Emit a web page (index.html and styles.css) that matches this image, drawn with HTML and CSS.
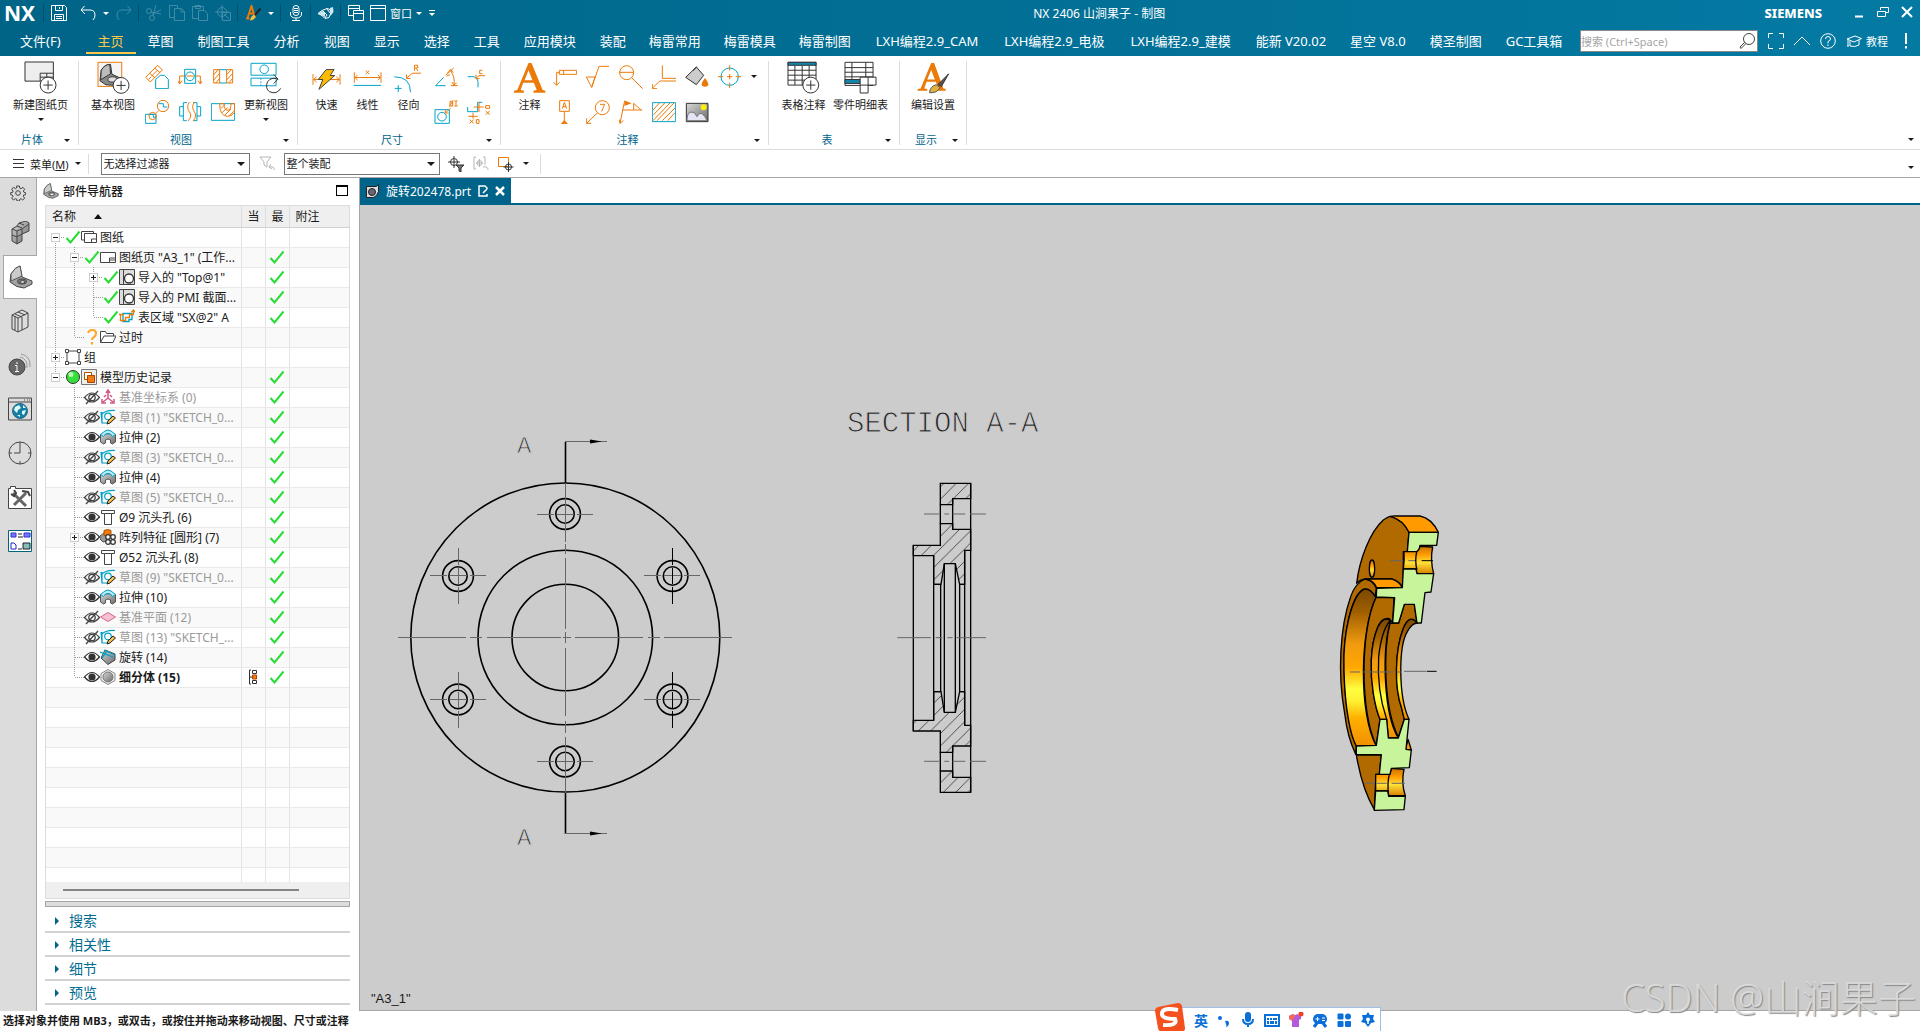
FILE: index.html
```html
<!DOCTYPE html>
<html lang="zh-CN">
<head>
  <meta charset="UTF-8">
  <meta name="viewport" content="width=device-width, initial-scale=1.0">
  <title>NX 2406 山涧果子 - 制图</title>
  <link rel="stylesheet" href="styles.css">
</head>
<body>
  <!-- shared icons -->
  <svg class="defs" width="0" height="0" aria-hidden="true">
    <defs>
      <linearGradient id="steel" x1="0" y1="0" x2="1" y2="1"><stop offset="0" stop-color="#d8d8d8"/><stop offset="1" stop-color="#6a6a6a"/></linearGradient>
      <symbol id="i-check" viewBox="0 0 16 16"><path d="M1.500 9l4 4.500L14.500 2.500" fill="none" stroke="#27dd35" stroke-width="2"/></symbol>
      <symbol id="i-eye" viewBox="0 0 16 16"><path d="M.500 8q7.500-9 15 0q-7.500 9-15 0z" fill="#fff" stroke="#333" stroke-width="1.200"/><circle cx="8" cy="8" r="3.600" fill="#333"/></symbol>
      <symbol id="i-eyeoff" viewBox="0 0 16 16"><path d="M.500 8.500q7.500-9 15 0q-7.500 9-15 0z" fill="none" stroke="#444" stroke-width="1.200"/><circle cx="8" cy="8.500" r="3.200" fill="none" stroke="#444" stroke-width="1.300"/><path d="M2 15L14 2" stroke="#444" stroke-width="1.300"/></symbol>
      <symbol id="i-sketch" viewBox="0 0 16 16"><path d="M2 3v11h6M1 6Q5 1 15 1.500M2 14L1 3" fill="none" stroke="#00a0c6" stroke-width="1.200"/><circle cx="8" cy="7.500" r="3.300" fill="none" stroke="#00a0c6" stroke-width="1.200"/><path d="M7 15l1-3 5-5 2.500 2-5.500 5z" fill="#f4c04a" stroke="#222"/></symbol>
      <symbol id="i-extrude" viewBox="0 0 16 16"><path d="M.500 5.500V13l3 2 2-1v-3q2.500-2 5 0v3l2 1 3-2V5.500l-4-1z" fill="url(#steel)" stroke="#555"/><path d="M.500 5.500L5 2l3-1 3 1 4.500 3.500-3 2-2-2.500q-2.500-1-5 0l-2 2.500z" fill="#b9eaf5" stroke="#00a0c6"/></symbol>
      <symbol id="i-hole" viewBox="0 0 16 16"><path d="M1.500 1.500h13v3h-3v11h-7v-11h-3zM4.500 4.500h7" fill="#fff" stroke="#444"/></symbol>
      <symbol id="i-view" viewBox="0 0 16 16"><path d="M.500.500h15v15H.500z" fill="#ddd" stroke="#444"/><path d="M4.500 1v14" stroke="#444"/><circle cx="10" cy="9.500" r="4.500" fill="#fff" stroke="#333" stroke-width="1.300"/></symbol>
      <symbol id="i-part" viewBox="0 0 24 24"><path d="M1 17L2 9Q6 2 11 1l2 11 10 4v3l-8 4q-7 0-14-6z" fill="#a3a3a3" stroke="#444"/><path d="M2 9Q6 2 11 1l2 10-11 5z" fill="#ccc" stroke="#555"/><ellipse cx="13" cy="16.500" rx="4.500" ry="2.500" fill="#777" stroke="#444"/><ellipse cx="13.500" cy="17" rx="2.500" ry="1.300" fill="#eee"/></symbol>
      <pattern id="hatch" width="37" height="37" patternUnits="userSpaceOnUse"><path d="M-4 41L41-4M-4 4L4-4M33 41L41 33" stroke="#333" stroke-width="2.500"/></pattern>
      <linearGradient id="gold" x1="0" y1="0" x2="0" y2="1"><stop offset="0" stop-color="#7a4800"/><stop offset=".15" stop-color="#a06000"/><stop offset=".35" stop-color="#f09a10"/><stop offset=".5" stop-color="#ffa800"/><stop offset=".64" stop-color="#ffff40"/><stop offset=".72" stop-color="#ffee30"/><stop offset=".82" stop-color="#ffb000"/><stop offset="1" stop-color="#f09000"/></linearGradient>
      <linearGradient id="brass" x1="0" y1="0" x2="0" y2="1"><stop offset="0" stop-color="#c87000"/><stop offset=".3" stop-color="#ff9c00"/><stop offset=".6" stop-color="#ffe03a"/><stop offset="1" stop-color="#d88000"/></linearGradient>
    </defs>
  </svg>

  <header class="header">
    <div class="topbar">
      <div class="quick">
        <span class="logo">NX</span><i class="qsep"></i>
        <button class="q" aria-label="保存"><svg viewBox="0 0 16 16"><path d="M.500.500h13l2 2v13H.500zM4.500.500v5h7v-5M8.500 2v2M3.500 15.500v-6h9v6M5 11.500h6M5 13.500h6"/></svg></button>
        <button class="q undo" aria-label="撤销"><svg viewBox="0 0 16 16"><path d="M4.500 1L1 5l4 4M1 5h9q5 0 5 5 0 3-2 5"/></svg></button>
        <button class="caret" aria-label="撤销列表"></button>
        <button class="q off" aria-label="重做"><svg viewBox="0 0 16 16"><path d="M11.500 1L15 5l-4 4M15 5H6Q1 5 1 10q0 3 2 5"/></svg></button><i class="qsep"></i>
        <button class="q off" aria-label="剪切"><svg viewBox="0 0 16 16"><circle cx="3" cy="6" r="2.500"/><circle cx="6" cy="13" r="2.500"/><path d="M5 7l10 2M7 11l3-11M6 9L15 5"/></svg></button>
        <button class="q off" aria-label="复制"><svg viewBox="0 0 16 16"><path d="M5 12.500H.500V.500h8v3M5.500 3.500h7l3 3v9h-10zM12 4v3h3"/></svg></button>
        <button class="q off" aria-label="粘贴"><svg viewBox="0 0 16 16"><path d="M6 13.500H.500v-12h11V5M3.500.500h5v3h-5zM6.500 5.500h6l3 3v7h-9z"/></svg></button>
        <button class="q off" aria-label="移动"><svg viewBox="0 0 16 16"><circle cx="7" cy="7" r="4.500"/><path d="M7 0v14M0 7h14M7.500 7.500h8v8h-8zM9 9l5 5"/></svg></button><i class="qsep"></i>
        <button class="q" aria-label="编辑设置"><svg viewBox="0 0 16 16"><path class="or bold" d="M1 13.500h3.500M2.500 13L6.500 1 10 13M4.500 8.500h5"/><path class="ink" d="M15.500 3.500L10 10" stroke-width="2"/><path d="M5 15.500q1-5 4-5.500l1.500 1.500Q9 15.500 5 15.500z" fill="#f2c14a" stroke="none"/></svg></button>
        <button class="caret" aria-label="编辑设置列表"></button><i class="qsep"></i>
        <button class="q" aria-label="语音"><svg viewBox="0 0 16 16"><rect x="5" y=".5" width="6" height="10" rx="3"/><path d="M6 3.500h4M6 5.500h4M6 7.500h4M2.500 7v2q0 4 5.500 4t5.500-4V7M8 13v2M4 15.500h8"/></svg></button><i class="qsep"></i>
        <button class="q" aria-label="重复命令"><svg viewBox="0 0 16 16"><path d="M0 8.500l4-3 5-2 3 1 1 3-2 5-4 1-3-3zM5 6l4 4-2 3M9 4l3 4"/><path d="M0 9l4-3 3 2v4l-4-2zM12 3l3-1 .500 5-3 4z" fill="#cfe8f0" stroke="none"/></svg></button><i class="qsep"></i>
        <button class="q" aria-label="层叠"><svg viewBox="0 0 16 16"><path d="M5 10.500H.500V.500h11V5M.500 3.500h11M5.500 5.500h10v10h-10zM5.500 8.500h10"/></svg></button>
        <button class="q win" aria-label="窗口菜单"><svg viewBox="0 0 16 16"><path d="M.500.500h15v15H.500zM.500 3.500h15"/></svg>窗口</button>
        <button class="caret" aria-label="窗口列表"></button>
        <button class="caret bar" aria-label="自定义"></button>
      </div>
      <div class="title">NX 2406 山涧果子 - 制图</div>
      <span class="brand">SIEMENS</span>
      <div class="winctl">
        <button aria-label="最小化"><svg viewBox="0 0 12 12"><path d="M2 10.500h8" stroke-width="2"/></svg></button>
        <button aria-label="还原"><svg viewBox="0 0 12 12"><path d="M3.500 4V1.500h8v5H9M.500 5.500h8v5h-8z"/></svg></button>
        <button aria-label="关闭"><svg viewBox="0 0 12 12"><path d="M1 1l10 10M11 1L1 11" stroke-width="2"/></svg></button>
      </div>
    </div>
    <nav class="menu">
      <a class="file" href="#">文件(F)</a>
      <a class="on" href="#">主页</a>
      <a href="#">草图</a>
      <a href="#">制图工具</a>
      <a href="#">分析</a>
      <a href="#">视图</a>
      <a href="#">显示</a>
      <a href="#">选择</a>
      <a href="#">工具</a>
      <a href="#">应用模块</a>
      <a href="#">装配</a>
      <a class="ml" href="#">梅雷常用</a>
      <a class="ml" href="#">梅雷模具</a>
      <a class="ml" href="#">梅雷制图</a>
      <a class="lxh" href="#">LXH编程2.9_CAM</a>
      <a class="lxh" href="#">LXH编程2.9_电极</a>
      <a class="lxh" href="#">LXH编程2.9_建模</a>
      <a href="#">能新 V20.02</a>
      <a href="#">星空 V8.0</a>
      <a href="#">模圣制图</a>
      <a href="#">GC工具箱</a>
      <div class="menu-right">
        <div class="search">
          <input type="text" aria-label="搜索" placeholder="搜索 (Ctrl+Space)">
          <button aria-label="查找"><svg viewBox="0 0 16 16"><circle cx="10" cy="6" r="5.500"/><path d="M6 9l-5 5 1 1.500 5-5"/></svg></button>
        </div>
        <button aria-label="全屏"><svg viewBox="0 0 16 16"><path d="M.500 5V.500H5M11 .500h4.500V5M15.500 11v4.500H11M5 15.500H.500V11"/></svg></button>
        <button aria-label="折叠功能区"><svg viewBox="0 0 16 16"><path d="M0 12l8-8 8 8"/></svg></button>
        <button aria-label="帮助"><svg viewBox="0 0 16 16"><circle cx="8" cy="8" r="7.300"/><path d="M5.500 6q0-2.500 2.500-2.500T10.500 6Q10.500 7.500 8 8.500v2M8 11.500V13"/></svg></button>
        <button class="tut"><svg viewBox="0 0 16 16"><path d="M1 6l8-3 6.500 2.500L8 9zM4 8v5q5 1.500 9-1V7M2 7v6M1 13h2"/></svg>教程</button>
        <button class="excl" aria-label="通知"><svg viewBox="0 0 4 16"><path d="M2 0v11M2 13v2.500" stroke-width="2"/></svg></button>
      </div>
    </nav>
  </header>

  <div class="ribbon">
    <section class="group sheet">
      <div class="tools">
        <button class="big"><svg viewBox="69 180 100 100"><path d="M72 183h86v58H72zM118 241v-24h40M118 229h40M138 217v24" fill="#eee"/><circle cx="142" cy="253" r="24" fill="#fff"/><path d="M142 239v28M128 253h28"/></svg>新建图纸页<i class="arrow"></i></button>
      </div>
      <footer><span>片体</span><button class="arrow" aria-label="片体选项"></button></footer>
    </section>
    <section class="group views">
      <div class="tools">
        <button class="big w54"><svg viewBox="289 180 100 100"><path class="or" d="M292 184h72v73h-72z" fill="#f4f4f4"/><path d="M298 240l4-32q10-18 28-18l4 30 26 12-16 22-28-2z" fill="#888"/><path d="M302 208q10-18 26-17l2 28-30 18z" fill="#bbb"/><ellipse cx="336" cy="236" rx="14" ry="8" fill="#ddd"/><circle cx="362" cy="254" r="24" fill="#fff"/><path d="M362 240v28M348 254h28"/></svg>基本视图</button>
        <div class="grid c3">
          <button aria-label="投影视图"><svg viewBox="432 195 72 72"><path class="or" d="M434 232l36-36 14 14-36 36zM443 238l8-8M452 228l16-16M462 234l-16-14M477 218l-16-14"/><path class="cy" d="M464 266v-28l14-12h12l12 12v28z" fill="#fff"/></svg></button>
          <button aria-label="剖视图"><svg viewBox="531 195 72 72"><path class="cy" d="M551 208h33v42h-33z"/><circle class="cy" cx="567" cy="229" r="13"/><path class="or" d="M551 228h-15v22M584 228h14v22M530 242l6 10 7-10M591 242l7 10 6-10M558 228h20"/></svg></button>
          <button aria-label="断开剖"><svg viewBox="630 195 72 72"><path class="or" d="M638 209h18v40h-18zM677 209h18v40h-18zM638 224l14-15M638 240l18-20M644 249l12-14M677 224l14-15M677 240l18-20M683 249l12-14"/><path class="cy" d="M656 209h21M656 249h21"/></svg></button>
          <button aria-label="局部放大图"><svg viewBox="432 300 72 72"><path class="cy" d="M433 343h32v27h-32z"/><path class="or" d="M464 341l9-9"/><circle class="or" cx="455" cy="348" r="11"/><circle class="or" cx="486" cy="318" r="17" fill="#fff"/><path class="cy" d="M473 311h14v10h12M446 343h11v9h8"/></svg></button>
          <button aria-label="断开视图"><svg viewBox="531 300 72 72"><path class="cy" d="M558 308h-11v54h10M547 320h-11v28h11M576 308h12v54h-10M588 320h11v28h-11"/><path class="or" d="M565 306q-10 16 0 29t-4 28M580 306q-10 16 0 29t-4 28"/></svg></button>
          <button aria-label="局部剖视图"><svg viewBox="630 300 72 72"><path class="cy" d="M631 311h70v50h-70z"/><path class="or" d="M656 311q0 38 24 38 12 0 20-11l1-27h-11q0 20-10 20t-11-20zM660 325l12-11M664 337l16-14M672 345l18-18M684 348l14-14"/></svg></button>
        </div>
        <button class="big w54"><svg viewBox="747 180 100 100"><path class="cy" d="M750 187h76v36h-76zM750 232h76v23h-76z"/><circle class="cy" cx="790" cy="205" r="13"/><path class="cy" d="M780 232v5M780 242v5M780 251v4"/><path d="M832 235q-20-8-32 8-8 20 6 30 22 10 34-10M819 221l13 14-13 13"/></svg>更新视图<i class="arrow"></i></button>
      </div>
      <footer><span>视图</span><button class="arrow" aria-label="视图选项"></button></footer>
    </section>
    <section class="group dims">
      <div class="tools">
        <button class="big w41"><svg viewBox="928 180 100 100"><path class="or" d="M937 220v32M1019 220v32M940 236h76M948 228l-9 8 9 8M1008 228l9 8-9 8"/><path d="M977 206h24l-12 18h14l-48 42 12-30h-14z" fill="#fb0" stroke="#444"/></svg>快速</button>
        <button class="big w41"><svg viewBox="1051 180 100 100"><path class="or" d="M1061 214v32M1142 214v32M1063 230h76M1071 222l-8 8 8 8M1132 222l8 8-8 8M1096 209l10 11M1106 209l-10 11"/><path class="cy" d="M1059 254h83"/></svg>线性</button>
        <button class="big w41"><svg viewBox="1170 180 100 100"><path class="cy" d="M1177 228q50 0 49 47M1178 263h21M1189 253v21"/><path class="or" d="M1258 217h-26l-18 15M1214 221v12h12M1238 210v-17h10v8h-10M1243 202l6 9"/></svg>径向</button>
        <div class="grid c2">
          <button aria-label="角度"><svg viewBox="1300 195 72 72"><path class="cy" d="M1329 232l-24 25h30"/><path class="or" d="M1335 226l24-22M1350 257h22M1350 212q14 22 10 44M1340 220l10-12 8 10M1354 246l6 10 8-8M1338 228l10-4"/></svg></button>
          <button aria-label="倒斜角"><svg viewBox="1400 195 72 72"><path class="cy" d="M1402 230h18q12 4 13 14v18"/><path class="or" d="M1454 227h-18l-9 8M1427 224v12h11M1446 211h-8v10h8"/></svg></button>
          <button aria-label="孔标注"><svg viewBox="1297 300 72 72"><path class="cy" d="M1300 329h43v41h-43z"/><circle class="cy" cx="1321" cy="350" r="13"/><path class="or" d="M1347 324l-16 15M1331 329v10h10M1345 304h8v14h-8zM1343 320l12-19M1363 304v14M1358 303h10M1358 318h10"/></svg></button>
          <button aria-label="坐标"><svg viewBox="1400 300 72 72"><path class="cy" d="M1402 321v14h30v-28h14"/><path class="or" d="M1420 321h30M1436 306v30M1456 317h12v8h-12zM1456 333l12 11M1468 333l-12 11M1404 349h28M1418 338v18M1408 359l12 11M1420 359l-12 11M1428 359h8v11h-8z"/></svg></button>
        </div>
      </div>
      <footer><span>尺寸</span><button class="arrow" aria-label="尺寸选项"></button></footer>
    </section>
    <section class="group notes">
      <div class="tools">
        <button class="big w37"><svg viewBox="97 180 100 100"><path class="fo" d="M100 276v-6l10-2 34-82h9l34 82 8 2v6h-36v-6l10-2-9-22h-32l-8 22 10 2v6zM132 238h24l-12-30z"/></svg>注释</button>
        <div class="grid c6">
          <button aria-label="特征控制框"><svg viewBox="222 195 72 72"><path class="or" d="M241 211h52v12h-52zM254 211v12M241 217h-8v38M224 247l9 9 9-9"/></svg></button>
          <button aria-label="表面粗糙度"><svg viewBox="321 195 72 72"><path class="or" d="M322 231h26l-10 31-16-31M338 262l22-63h30"/></svg></button>
          <button aria-label="放大标签"><svg viewBox="420 195 72 72"><circle class="or" cx="443" cy="218" r="21"/><path class="or" d="M421 217h43M458 233l33 33"/></svg></button>
          <button aria-label="引出线"><svg viewBox="519 195 72 72"><path class="or" d="M550 196v39h41M591 243h-49l-22 22M520 252v14h14"/></svg></button>
          <button aria-label="填充"><svg viewBox="618 195 72 72"><path d="M652 201l22 25-22 28-32-22z" fill="#ccc"/><path d="M643 212l10-12"/><path class="fo" d="M678 234q20 26 0 26t0-26z"/></svg></button>
          <button aria-label="中心标记"><svg viewBox="717 195 72 72"><circle class="cy" cx="752" cy="230" r="26"/><path class="or" d="M752 196v16M752 222v16M752 248v16M717 230h16M744 230h16M770 230h16"/></svg></button>
          <button aria-label="基准特征"><svg viewBox="222 300 72 72"><path class="or" d="M242 302h29v32h-29zM256 334v30M250 326l6-19 7 19M252 320h9"/><path class="fo" d="M256 360l11 12h-22z"/></svg></button>
          <button aria-label="符号标注"><svg viewBox="321 300 72 72"><circle class="or" cx="370" cy="323" r="21"/><path class="or" d="M356 338l-33 32M322 355v15h15M363 313h14l-9 21"/></svg></button>
          <button aria-label="焊接符号"><svg viewBox="420 300 72 72"><path class="or" d="M437 302l-14 68M420 358l3 12 10-8M430 330h60M464 330v-20l22 20"/><path class="fo" d="M438 302l20 8-22 8z"/></svg></button>
          <button aria-label="剖面线"><svg viewBox="519 300 72 72"><path class="or" d="M522 330l20-22M522 346l36-38M522 362l52-54M534 362l52-54M550 362l38-38M566 362l22-24"/><path class="cy" d="M520 308h70v57h-70z"/></svg></button>
          <button aria-label="图像"><svg viewBox="618 300 72 72"><path d="M622 310h65v55h-65z" fill="url(#steel)" stroke="#333"/><path d="M624 362q0-24 12-26t18 14q8-14 16-8t14 20z" fill="#e4e4f4" stroke="#777"/><circle cx="674" cy="322" r="9" fill="#fe0" stroke="none"/></svg></button>
        </div>
        <button class="arrow more" aria-label="更多注释"></button>
      </div>
      <footer><span>注释</span><button class="arrow" aria-label="注释选项"></button></footer>
    </section>
    <section class="group tables">
      <div class="tools">
        <button class="big w57"><svg viewBox="919 180 100 100"><path d="M922 184h85v69h-85zM922 208h85M922 223h85M922 238h85M943 193v60M965 193v60M986 193v60" fill="#fff"/><path d="M922 184h85v9h-85z" fill="#1486ad"/><circle cx="991" cy="253" r="24" fill="#fff"/><path d="M991 239v28M977 253h28"/></svg>表格注释</button>
        <button class="big w57"><svg viewBox="1090 180 100 100"><path d="M1093 184h85v70h-85zM1093 200h85M1093 214h85M1093 228h85M1114 184v50M1156 184v50" fill="#fff"/><path d="M1093 236h46v12h-46z" fill="#1486ad"/><path d="M1139 229h48v24h-48zM1163 229v48h-24v-24" fill="#fff"/></svg>零件明细表</button>
      </div>
      <footer><span>表</span><button class="arrow" aria-label="表选项"></button></footer>
    </section>
    <section class="group show">
      <div class="tools">
        <button class="big"><svg viewBox="1312 180 100 100"><path class="fo" d="M1314 270v-5l9-2 32-77h9l28 77 7 2v5h-31v-5l8-2-7-20h-28l-7 20 9 2v5zM1343 236h23l-11-29z"/><path d="M1408 219l-22 38-10-6z" fill="#555"/><path d="M1350 276q2-20 20-24l12 8q-8 18-32 16z" fill="#e3b23c" stroke="#555"/></svg>编辑设置</button>
      </div>
      <footer><span>显示</span><button class="arrow" aria-label="显示选项"></button></footer>
    </section>
    <button class="arrow ribbon-end" aria-label="功能区选项"></button>
  </div>

  <div class="selbar">
    <button class="menubtn"><svg viewBox="0 0 11 11"><path d="M0 1.500h11M0 5.500h11M0 9.500h11"/></svg><span>菜单(<u>M</u>)</span><i class="arrow"></i></button>
    <i class="vsep"></i>
    <select class="s1" aria-label="类型过滤器"><option>无选择过滤器</option></select>
    <button class="ic" aria-label="重置过滤器"><svg viewBox="0 0 16 16" class="grey"><path d="M1 1h11L8 6v5l-3-2V6zM15 14q1-4-5-3M12 8l-2 3 3 2"/></svg></button>
    <select class="s2" aria-label="选择范围"><option>整个装配</option></select>
    <button class="ic" aria-label="选择过滤"><svg viewBox="0 0 16 16"><circle cx="6" cy="6" r="3.500"/><path d="M6 0v12M0 6h12"/><path d="M8 9h8l-3 3v4l-2-1v-3z" fill="#777"/></svg></button>
    <button class="ic" aria-label="捕捉"><svg viewBox="0 0 16 16" class="grey"><path d="M3 1H1v12h2M10 1h2v8M6.500 3v8M3 7h7M15 14q0-4-5-3"/><circle cx="6.500" cy="7" r="2.500"/></svg></button>
    <button class="ic" aria-label="点选择"><svg viewBox="0 0 16 16"><path class="or" d="M.500 1.500h10v9H.500z"/><circle cx="10.500" cy="11" r="3"/><path d="M10.500 6v10M5.500 11h10"/></svg></button>
    <button class="arrow" aria-label="点选择列表"></button>
    <i class="vsep end"></i>
    <button class="arrow bar-end" aria-label="选择条选项"></button>
  </div>

  <main class="main">
    <aside class="rail">
      <button class="gear" aria-label="设置"><svg viewBox="0 0 24 24"><circle cx="12" cy="12" r="3.500"/><path d="M10 1.500h4l.500 3 2 1 3-2 2.500 3-2 2.500 1 2 2.500.500v3l-3 .500-.500 2 2 3-3 2.500-2.500-2-2 1-.500 2.500h-3.500l-.500-3-2-.500-3 2-2.500-3 2-2.500-1-2-2.500-.500v-3l3-.500.500-2-2-3 3-2.500 2.500 2 2-1z"/></svg></button>
      <button aria-label="装配导航器"><svg viewBox="0 0 24 24"><path d="M4 8l5-3 2-3 7-2 3 2v8l-7 3v7l-5 3-5-3z" fill="url(#steel)"/><path d="M4 8l5 2 5-2M9 10v13M4 14l5 2 5-3M14 8l7-5M14 8v5M9 5l5 2M11 2l5 2"/></svg></button>
      <button class="on" aria-label="部件导航器"><svg viewBox="0 0 24 24"><use href="#i-part"/></svg></button>
      <button aria-label="重用库"><svg viewBox="0 0 24 24"><path d="M4 6l6 3v14l-6-3zM4 6l10-5 6 3v14l-10 5M10 9l10-5M7 5l7 3M10 3l7 3" fill="#ddd"/><path d="M14 8v13M7 7v14"/></svg></button>
      <button aria-label="信息"><svg viewBox="0 0 24 24"><circle cx="9" cy="14" r="8" fill="#666"/><path d="M9 9v2M9 12.500v6M7 18.500h4M7 12.500h2" stroke="#fff"/><path d="M12 4q8 2 7 11M13 1q10 2 9 13" stroke="#999"/></svg></button>
      <button aria-label="网页浏览器"><svg viewBox="0 0 24 24"><path d="M.500 1h23v22H.500zM.500 5h23M16 3h1M19 3h1M21 3h1"/><circle cx="12" cy="14" r="7.500" fill="#167ea5" stroke="#2a6a85"/><path d="M7 10l4-2 2 3-3 2-1 3-3-3zM14 14l4-1-2 5-2-1zM15 8l3 3-3 0zM9 18l3 0 0 2z" fill="#dff" stroke="none"/></svg></button>
      <button aria-label="历史记录"><svg viewBox="0 0 24 24"><circle cx="12" cy="12" r="11"/><path d="M12 1v11H6M12 20v3M1 12h3M20 12h3"/></svg></button>
      <button aria-label="加工向导"><svg viewBox="0 0 24 24"><path d="M.500 3.500h2v-2h5v2h16v20H.500z" fill="#fff"/><path d="M5 8l13 13M18 8L6 20" stroke="#666" stroke-width="3"/><path d="M3 9l3 2 2-3-2-3M14 6l6 1 2 4" stroke-width="2"/></svg></button>
      <button aria-label="角色"><svg viewBox="0 0 24 24"><path d="M.500 1.500h23v21H.500z" fill="#fff" stroke="#067"/><path d="M3 4h5v4H3zM16 4h6v4h-6z" fill="#77f" stroke="#33c"/><path d="M15 14h7v6h-7z" fill="#8bb" stroke="#222"/><path d="M3 14h3l2 2v4H3z" stroke="#22c" fill="#fff"/><path d="M10 5h4M10 8h5M10 20h4" stroke="#222"/></svg></button>
    </aside>

    <section class="panel">
      <div class="panel-head"><svg viewBox="0 0 24 24"><use href="#i-part"/></svg><h2>部件导航器</h2><button aria-label="最大化"></button></div>
      <div class="tree">
        <div class="rows">
        <table>
          <colgroup><col><col class="c-s"><col class="c-s"><col class="c-n"></colgroup>
          <thead><tr><th>名称<i class="sort"></i></th><th>当</th><th>最</th><th>附注</th></tr></thead>
          <tbody>
            <tr><td><div class="n"><button class="g t0" aria-label="折叠"></button><svg><use href="#i-check"/></svg><svg viewBox="0 0 16 16"><path d="M3 11H.500V2.500h12V4M3.500 4.500h12v9h-12zM10.500 13v-3h5" fill="#fff" stroke="#444"/></svg><b>图纸</b></div></td><td></td><td></td><td></td></tr>
            <tr><td><div class="n"><i class="g v"></i><button class="g t1" aria-label="折叠"></button><svg><use href="#i-check"/></svg><svg viewBox="0 0 16 16"><path d="M.500 3.500h15v10H.500zM9.500 13v-4h6M9.500 11h6" fill="#fff" stroke="#444"/></svg><b>图纸页 "A3_1" (工作...</b></div></td><td></td><td><svg><use href="#i-check"/></svg></td><td></td></tr>
            <tr><td><div class="n"><i class="g v"></i><i class="g v"></i><button class="g t1 plus" aria-label="展开"></button><svg><use href="#i-check"/></svg><svg><use href="#i-view"/></svg><b>导入的 "Top@1"</b></div></td><td></td><td><svg><use href="#i-check"/></svg></td><td></td></tr>
            <tr><td><div class="n"><i class="g v"></i><i class="g v"></i><i class="g t"></i><svg><use href="#i-check"/></svg><svg><use href="#i-view"/></svg><b>导入的 PMI 截面...</b></div></td><td></td><td><svg><use href="#i-check"/></svg></td><td></td></tr>
            <tr><td><div class="n"><i class="g v"></i><i class="g v"></i><i class="g l"></i><svg><use href="#i-check"/></svg><svg viewBox="0 0 16 16"><path d="M4 4.500h9v6h-3v2H4z" fill="none" stroke="#00a0c6" stroke-width="1.300"/><path d="M0 5.500h5M1.500 5.500v6h5v-3h4v-3h4V1M12.500 3l2-2 1.500 2" fill="none" stroke="#ec7a08" stroke-width="1.300"/></svg><b>表区域 "SX@2" A</b></div></td><td></td><td><svg><use href="#i-check"/></svg></td><td></td></tr>
            <tr><td><div class="n"><i class="g v"></i><i class="g l"></i><svg viewBox="0 0 16 16"><path d="M4 4q1-3 4-3 4 0 4 3.500 0 2-2 3.500-2 1-2 3M8 13v2.500" fill="none" stroke="#fba92f" stroke-width="2.200"/></svg><svg viewBox="0 0 16 16"><path d="M.500 13V2.500h5l1 2h7V7M.500 13.500L4 7h12l-3 6.500z" fill="#fff" stroke="#444"/></svg><b>过时</b></div></td><td></td><td></td><td></td></tr>
            <tr><td><div class="n"><button class="g t1 plus" aria-label="展开"></button><svg viewBox="0 0 16 16"><path d="M2 2h12v12H2z" fill="#fff" stroke="#444"/><path d="M.500.500h3v3h-3zM12.500.500h3v3h-3zM.500 12.500h3v3h-3zM12.500 12.500h3v3h-3z" fill="#fff" stroke="#444"/></svg><b>组</b></div></td><td></td><td></td><td></td></tr>
            <tr><td><div class="n"><button class="g t2" aria-label="折叠"></button><svg viewBox="0 0 16 16"><circle cx="8" cy="8" r="6.500" fill="#35e03d" stroke="#333"/><circle cx="6" cy="5.500" r="2.500" fill="#b5ffb0"/></svg><svg viewBox="0 0 16 16"><path d="M.500.500h15v15H.500z" fill="#eee" stroke="#777"/><path d="M3.500 3.500h7v7h-7z" fill="#fff" stroke="#a50"/><path d="M6.500 6.500h7v7h-7z" fill="#f47a10" stroke="#a40"/></svg><b>模型历史记录</b></div></td><td></td><td><svg><use href="#i-check"/></svg></td><td></td></tr>
            <tr class="dim"><td><div class="n"><i class="g"></i><i class="g t"></i><svg><use href="#i-eyeoff"/></svg><svg viewBox="0 0 16 16"><path d="M8 9V3M8 9l-5 4M8 9l5 4M6 4l2-3 2 3M2 10v4h4M14 10v4h-4M4 8l2-2M12 8l-2-2" fill="none" stroke="#cf5a86" stroke-width="1.500"/></svg><b>基准坐标系 (0)</b></div></td><td></td><td><svg><use href="#i-check"/></svg></td><td></td></tr>
            <tr class="dim"><td><div class="n"><i class="g"></i><i class="g t"></i><svg><use href="#i-eyeoff"/></svg><svg><use href="#i-sketch"/></svg><b>草图 (1) "SKETCH_0...</b></div></td><td></td><td><svg><use href="#i-check"/></svg></td><td></td></tr>
            <tr><td><div class="n"><i class="g"></i><i class="g t"></i><svg><use href="#i-eye"/></svg><svg><use href="#i-extrude"/></svg><b>拉伸 (2)</b></div></td><td></td><td><svg><use href="#i-check"/></svg></td><td></td></tr>
            <tr class="dim"><td><div class="n"><i class="g"></i><i class="g t"></i><svg><use href="#i-eyeoff"/></svg><svg><use href="#i-sketch"/></svg><b>草图 (3) "SKETCH_0...</b></div></td><td></td><td><svg><use href="#i-check"/></svg></td><td></td></tr>
            <tr><td><div class="n"><i class="g"></i><i class="g t"></i><svg><use href="#i-eye"/></svg><svg><use href="#i-extrude"/></svg><b>拉伸 (4)</b></div></td><td></td><td><svg><use href="#i-check"/></svg></td><td></td></tr>
            <tr class="dim"><td><div class="n"><i class="g"></i><i class="g t"></i><svg><use href="#i-eyeoff"/></svg><svg><use href="#i-sketch"/></svg><b>草图 (5) "SKETCH_0...</b></div></td><td></td><td><svg><use href="#i-check"/></svg></td><td></td></tr>
            <tr><td><div class="n"><i class="g"></i><i class="g t"></i><svg><use href="#i-eye"/></svg><svg><use href="#i-hole"/></svg><b>Ø9 沉头孔 (6)</b></div></td><td></td><td><svg><use href="#i-check"/></svg></td><td></td></tr>
            <tr><td><div class="n"><i class="g"></i><button class="g t1 plus" aria-label="展开"></button><svg><use href="#i-eye"/></svg><svg viewBox="0 0 16 16"><path d="M0 7l4-3 3 3v5l-4 1-3-3z" fill="#999" stroke="#555"/><path d="M4 1.500q4-2 7 0v5H4z" fill="#f47a10" stroke="#a50"/><g fill="#fff" stroke="#333" stroke-width="1.300"><circle cx="8" cy="8" r="2.300"/><circle cx="13" cy="8" r="2.300"/><circle cx="8" cy="13" r="2.300"/><circle cx="13" cy="13" r="2.300"/></g></svg><b>阵列特征 [圆形] (7)</b></div></td><td></td><td><svg><use href="#i-check"/></svg></td><td></td></tr>
            <tr><td><div class="n"><i class="g"></i><i class="g t"></i><svg><use href="#i-eye"/></svg><svg><use href="#i-hole"/></svg><b>Ø52 沉头孔 (8)</b></div></td><td></td><td><svg><use href="#i-check"/></svg></td><td></td></tr>
            <tr class="dim"><td><div class="n"><i class="g"></i><i class="g t"></i><svg><use href="#i-eyeoff"/></svg><svg><use href="#i-sketch"/></svg><b>草图 (9) "SKETCH_0...</b></div></td><td></td><td><svg><use href="#i-check"/></svg></td><td></td></tr>
            <tr><td><div class="n"><i class="g"></i><i class="g t"></i><svg><use href="#i-eye"/></svg><svg><use href="#i-extrude"/></svg><b>拉伸 (10)</b></div></td><td></td><td><svg><use href="#i-check"/></svg></td><td></td></tr>
            <tr class="dim"><td><div class="n"><i class="g"></i><i class="g t"></i><svg><use href="#i-eyeoff"/></svg><svg viewBox="0 0 16 16"><path d="M.500 8L8 3.500 15.500 8 8 12.500z" fill="#f6bfd2" stroke="#d4668f"/></svg><b>基准平面 (12)</b></div></td><td></td><td><svg><use href="#i-check"/></svg></td><td></td></tr>
            <tr class="dim"><td><div class="n"><i class="g"></i><i class="g t"></i><svg><use href="#i-eyeoff"/></svg><svg><use href="#i-sketch"/></svg><b>草图 (13) "SKETCH_...</b></div></td><td></td><td><svg><use href="#i-check"/></svg></td><td></td></tr>
            <tr><td><div class="n"><i class="g"></i><i class="g t"></i><svg><use href="#i-eye"/></svg><svg viewBox="0 0 16 16"><path d="M1 9l4-8 10 4v6l-7 4.500z" fill="url(#steel)" stroke="#444"/><path d="M0 3l13 5M4 1l11 5M2 9l5-7" fill="none" stroke="#00a0c6" stroke-width="1.300"/></svg><b>旋转 (14)</b></div></td><td></td><td><svg><use href="#i-check"/></svg></td><td></td></tr>
            <tr class="cur"><td><div class="n"><i class="g"></i><i class="g l"></i><svg><use href="#i-eye"/></svg><svg viewBox="0 0 16 16"><path d="M8 .500l7 4v7l-7 4-7-4v-7z" fill="#eee" stroke="#888"/><circle cx="8" cy="8" r="5" fill="url(#steel)" stroke="#777"/></svg><b>细分体 (15)</b></div></td><td><svg viewBox="0 0 16 16"><path d="M6 1H4.500v14H6M4.500 8h3" fill="none" stroke="#333"/><path d="M7.500 1.500h4v3h-4zM7.500 11.500h4v3h-4z" fill="#fff" stroke="#333"/><path d="M7.500 6h4v4h-4z" fill="#f47a10" stroke="#a40"/></svg></td><td><svg><use href="#i-check"/></svg></td><td></td></tr>
            <tr><td></td><td></td><td></td><td></td></tr>
            <tr><td></td><td></td><td></td><td></td></tr>
            <tr><td></td><td></td><td></td><td></td></tr>
            <tr><td></td><td></td><td></td><td></td></tr>
            <tr><td></td><td></td><td></td><td></td></tr>
            <tr><td></td><td></td><td></td><td></td></tr>
            <tr><td></td><td></td><td></td><td></td></tr>
            <tr><td></td><td></td><td></td><td></td></tr>
            <tr><td></td><td></td><td></td><td></td></tr>
            <tr><td></td><td></td><td></td><td></td></tr>
          </tbody>
        </table>
        </div>
        <div class="hscroll"><i></i></div>
      </div>
      <div class="splitter"></div>
      <div class="acc">
        <button>搜索</button>
        <button>相关性</button>
        <button>细节</button>
        <button>预览</button>
      </div>
    </section>

    <section class="work">
      <div class="tabs">
        <div class="tab">
          <svg viewBox="0 0 16 16"><path d="M1.500 3.500h10l2-2v7l-2 4-3 2h-7z" fill="#ddd" stroke="#222"/><circle cx="7" cy="9" r="3.500" fill="#667" stroke="#222"/></svg>
          <span>旋转202478.prt</span>
          <svg class="s" viewBox="0 0 10 12"><path d="M9 4V3L7 1H1v10h8V9M5 8l4-4" fill="none" stroke="#fff" stroke-width="1.500"/></svg>
          <button aria-label="关闭选项卡"><svg class="s" viewBox="0 0 10 12"><path d="M1 2l8 8M9 2L1 10" stroke="#fff" stroke-width="2.500"/></svg></button>
        </div>
      </div>
      <div class="canvas">
        <svg class="drawing" viewBox="360 205 1560 805" preserveAspectRatio="xMinYMin meet">
          <!-- front view -->
          <g class="thick">
            <circle cx="565.300" cy="637.500" r="154.500"/>
            <circle cx="565.300" cy="637.500" r="87.300"/>
            <circle cx="565.300" cy="637.500" r="53.300"/>
            <path d="M565.500 442v41M565.500 793v41"/>
            <circle cx="565" cy="514" r="15.400"/><circle cx="565" cy="514" r="9.200"/>
            <circle cx="565" cy="761.500" r="15.400"/><circle cx="565" cy="761.500" r="9.200"/>
            <circle cx="458" cy="576" r="15.400"/><circle cx="458" cy="576" r="9.200"/>
            <circle cx="672.500" cy="576" r="15.400"/><circle cx="672.500" cy="576" r="9.200"/>
            <circle cx="458" cy="699.500" r="15.400"/><circle cx="458" cy="699.500" r="9.200"/>
            <circle cx="672.500" cy="699.500" r="15.400"/><circle cx="672.500" cy="699.500" r="9.200"/>
          </g>
          <path class="axis" d="M398 637.500h68M470 637.500h12M487 637.500h74M563 637.500h8M575 637.500h68M648 637.500h12M664 637.500h68M565.500 483v59M565.500 544v10M565.500 558v71M565.500 632v11M565.500 648v68M565.500 721v12M565.500 737v56M565 441.500h42M565 833.500h42"/>
          <path class="axis" d="M537 514.500h17M557 514.500h17M577 514.500h16M537 761.500h17M557 761.500h17M577 761.500h16M430 575.500h17M450 575.500h17M470 575.500h16M430 699.500h17M450 699.500h17M470 699.500h16M644 575.500h17M664 575.500h17M684 575.500h16M644 699.500h17M664 699.500h17M684 699.500h16M458.500 548v17M458.500 568v16M458.500 587v17M458.500 672v17M458.500 692v16M458.500 711v17"/>
          <path class="mark" d="M672.500 548v17M672.500 568v16M672.500 587v17M672.500 672v17M672.500 692v16M672.500 711v17"/>
          <path d="M590 439.500l12 2-12 2zM590 831.500l12 2-12 2z"/>
          <text class="lbl" x="517" y="453">A</text>
          <text class="lbl" x="517" y="845">A</text>

          <!-- section A-A -->
          <text class="sec" x="847" y="432">SECTION A-A</text>
          <g transform="translate(830 400) scale(.3333)">
            <path class="cut" d="M331 250H422V296H368V314H331zM331 371H368V388H422V451H404V553H389L376 491H343L333 553H311V467H250V436H331zM331 1057H368V1038H422V976H404V875H389L376 937H343L333 875H311V961H250V993H331zM331 1177H422V1132H368V1113H331z"/>
            <path class="edge" d="M250 436V993M311 467V961M332 553V875M343 491V937M376 491V937M389 553V875M404 451V976M422 250V1177M331 314V371M331 1057V1113M368 296V388M368 1038V1132M311 553h22M389 553h15M311 875h22M389 875h15"/>
            <path class="axis w3" d="M282 342h45M343 342h14M368 342h38M420 342h48M282 1084h45M343 1084h14M368 1084h38M420 1084h48M202 713h101M317 713h20M352 713h16M379 713h89"/>
          </g>

          <!-- cutaway body -->
          <g class="body" transform="translate(1320 500) scale(.3333)">
            <path class="br" d="M110 250C118 180 150 95 190 60Q205 50 212 49Q250 60 267 97L262 155 250 155V207L248 262Q238 245 215 237H135Q118 240 110 250z"/>
            <path class="or1" d="M212 49Q218 47 230 48H300Q335 55 355 97H267Q250 60 212 49z"/>
            <ellipse cx="156" cy="206" rx="8" ry="26" fill="url(#brass)"/>
            <path class="br" d="M135 237Q105 250 92 290C60 380 52 520 74 640Q82 710 107 763L109 738C92 700 76 630 72 510C68 400 95 285 130 268Q152 265 165 291L169 265Q160 240 135 237z"/>
            <path fill="url(#gold)" d="M168 293Q150 262 130 268C95 290 68 400 72 510C75 630 92 710 109 738H169C115 640 120 390 168 293z"/>
            <path class="br" d="M168 293L222 293 218 369 208 356Q185 350 172 385C150 440 150 520 160 580Q168 630 180 658L169 736C120 640 120 390 168 293z"/>
            <path fill="url(#gold)" d="M212 363Q190 345 172 385C150 440 150 520 160 580Q168 630 180 658H200L205 714H235C190 640 185 450 212 363z"/>
            <path d="M210 363Q185 390 176 470Q170 570 200 658" fill="none"/>
            <path class="br" d="M218 369H236L253 313H283L291 369Q265 345 250 385C225 450 222 560 245 625L253 658 235 712C190 620 190 450 210 370z"/>
            <path fill="url(#gold)" d="M291 369Q270 340 250 385C225 450 222 560 245 625L253 658H267C235 590 235 440 262 395Q275 370 291 369z"/>
            <path class="or1" d="M135 237H215Q238 245 247 263H170Q160 240 135 237z"/>
            <path class="gr" d="M267 97H355L350 136H300L297 155H262z"/>
            <path fill="url(#brass)" d="M252 155H290L297 148 300 139 338 141Q330 180 341 221H291L288 207H250Q254 180 252 155z"/>
            <path d="M290 155Q284 185 291 210" fill="none"/>
            <path class="gr" d="M250 207H288L291 221H341L333 276 315 278 304 369H291L283 313H253L236 369H218L224 293 169 291 170 265 247 263z"/>
            <path class="br" d="M109 765H184L178 823H168L163 929C140 890 120 830 109 765z"/>
            <path fill="url(#brass)" d="M178 823H210L214 805 252 808Q243 850 256 887H206L203 873H167V823z"/>
            <path d="M208 823Q201 850 206 889" fill="none"/>
            <path class="or1" d="M264 718L274 750H256z"/>
            <path class="gr" d="M180 658H200L205 714H235L253 658H267L258 748 274 750 268 803 214 805 210 823H178L184 764 109 763V738L169 736z"/>
            <path class="gr" d="M167 873H203L206 889H256L252 929 163 931z"/>
            <path class="axis w3" d="M210 182h40M265 182h20M90 516h30M130 516h90M230 516h16M252 514h66M134 850h30M170 850h30M215 850h40"/>
            <path class="mark w3" d="M305 182h34M320 514h30"/>
          </g>
        </svg>
        <div class="sheetname">"A3_1"</div>
      </div>
    </section>
  </main>

  <div class="status">选择对象并使用 MB3，或双击，或按住并拖动来移动视图、尺寸或注释</div>

  <div class="ime">
    <svg class="sogou" viewBox="0 0 32 30"><path d="M4 5L24 1q3 0 4 3l3 22q0 4-4 4H8q-3 0-4-4L1 9q0-3 3-4z" fill="#f4511e"/><path d="M24 8Q9 5 8 11t13 6q3 7-12 6" fill="none" stroke="#fff" stroke-width="4"/></svg>
    <b>英</b>
    <svg viewBox="0 0 16 16"><circle cx="4" cy="6" r="2"/><path d="M9 9q4-1 4 2t-3 4q1-2 0-3z"/></svg>
    <svg viewBox="0 0 16 16"><rect x="5" y="0" width="6" height="10" rx="3"/><path d="M3 7q0 5 5 5t5-5M8 12v3" fill="none" stroke="#0a6fd8" stroke-width="2"/></svg>
    <svg viewBox="0 0 16 16"><path d="M1 3h14v11H1z" fill="none" stroke="#0a6fd8" stroke-width="2"/><path d="M3 6h2v2H3zM6 6h2v2H6zM9 6h4v2H9zM3 9h2v3H3zM6 9h4v3H6zM11 9h2v3h-2z"/></svg>
    <svg viewBox="0 0 16 16"><path d="M1 4l4-2q2 2 4 0l4 2v3l-2 1v7H4V8L1 7z" fill="#b45ad8"/><path d="M1 4l4-2q2 2 3 1L4 9 1 7z" fill="#f46a5a"/><circle cx="13" cy="2" r="2.500" fill="#f4401e"/></svg>
    <svg viewBox="0 0 16 16"><rect x="1" y="2" width="14" height="10" rx="5"/><path d="M2 15l3-4M14 15l-3-4" stroke="#0a6fd8" stroke-width="3"/><path d="M3.500 7h4M5.500 5v4M10 6h3M10 8.500h3" stroke="#fff"/></svg>
    <svg viewBox="0 0 16 16"><rect x="1.500" y="1.500" width="6" height="6" rx="1"/><circle cx="12" cy="4.500" r="3"/><rect x="1.500" y="9" width="6" height="6" rx="1"/><rect x="9" y="9" width="6" height="6" rx="1"/></svg>
    <svg viewBox="0 0 16 16"><path d="M8 0l2 3h4l-1 4 2 3-4 1-3 4-3-4-4-1 2-3-1-4h4z"/><circle cx="8" cy="7.500" r="2" fill="#fff"/><path d="M8 8v4" stroke="#fff" stroke-width="1.500"/></svg>
  </div>
  <div class="mark-text">CSDN @山涧果子</div>
</body>
</html>
```
FILE: styles.css
```css
* {
  box-sizing: border-box;
}
body {
  margin: 0;
  height: 100vh;
  display: flex;
  flex-direction: column;
  position: relative;
  overflow: hidden;
  background: #fff;
  color: #1a1a1a;
  font-family: "Noto Sans", "Noto Sans CJK SC", sans-serif;
  font-size: 12px;
}
button, input, select {
  font: inherit;
  color: inherit;
  border: none;
  background: none;
  margin: 0;
  padding: 0;
}
a {
  color: inherit;
  text-decoration: none;
}
svg {
  flex: none;
}
.defs {
  position: absolute;
}

/* title bar and menu */
.header {
  height: 56px;
  color: #fff;
  background: linear-gradient(90deg, #006487, #047aa3);
}
.header svg {
  width: 16px;
  height: 16px;
  fill: none;
  stroke: #fff;
}
.topbar {
  height: 26px;
  display: flex;
  align-items: center;
}
.quick {
  display: flex;
  align-items: center;
}
.logo {
  width: 40px;
  padding-left: 4px;
  font: bold 21px/26px "Noto Sans", sans-serif;
}
.qsep {
  width: 1px;
  height: 18px;
  margin: 0 3px;
  background: #004f6c;
}
.q {
  width: 23px;
  height: 24px;
  display: flex;
  align-items: center;
  justify-content: center;
}
.q.undo {
  width: 29px;
  padding-left: 6px;
}
.q.off {
  opacity: .25;
}
.q.win {
  width: auto;
  padding-left: 3px;
  gap: 4px;
  font-size: 11px;
}
.caret {
  width: 13px;
  height: 14px;
  display: flex;
  flex-direction: column;
  align-items: center;
  justify-content: center;
}
.caret::after {
  content: "";
  border: 3px solid transparent;
  border-top-color: #fff;
  border-bottom: none;
}
.caret.bar::before {
  content: "";
  width: 6px;
  height: 1px;
  margin-bottom: 2px;
  background: #fff;
}
.or { stroke: #ec7a08 !important; }
.cy { stroke: #00a3c7 !important; }
.fo { fill: #ec7a08 !important; stroke: none; fill-rule: evenodd; }
.ink { stroke: #222; }
.bold { stroke-width: 2; }
.title {
  flex: 1;
  padding-right: 4px;
  text-align: center;
}
.brand {
  font: 800 13px "Noto Sans", sans-serif;
  margin-right: 25px;
}
.winctl {
  display: flex;
  padding-right: 1px;
}
.winctl button {
  width: 24px;
  height: 24px;
}
.winctl svg {
  width: 12px;
  height: 12px;
}
.menu {
  height: 30px;
  display: flex;
  font-size: 13px;
  white-space: nowrap;
}
.menu a {
  padding: 0 12px;
  line-height: 30px;
}
.menu a.file {
  padding: 0 25px 0 20px;
}
.menu a.on {
  height: 28px;
  color: #ffc64a;
  border-bottom: 2px solid #ffc64a;
}
.menu a.ml {
  padding: 0 12px 0 11px;
}
.menu a.lxh {
  padding: 0 13px;
}
.menu-right {
  flex: 1;
  display: flex;
  align-items: center;
  justify-content: flex-end;
  gap: 10px;
  padding-right: 12px;
}
.menu-right button {
  display: flex;
  align-items: center;
  gap: 4px;
  font-size: 11px;
}
.search {
  width: 178px;
  height: 22px;
  display: flex;
  align-items: center;
  border: 1px solid #888;
  background: #fff;
}
.search input {
  flex: 1;
  min-width: 0;
  font-size: 11px;
  color: #222;
}
.search input::placeholder {
  color: #a5a5a5;
}
.search svg {
  stroke: #444;
  margin-right: 2px;
}
.excl svg {
  width: 4px;
  margin-left: 6px;
}

/* ribbon */
.ribbon {
  height: 94px;
  display: flex;
  border-bottom: 1px solid #dcdcdc;
}
.ribbon svg, .selbar svg {
  width: 24px;
  height: 24px;
  fill: none;
  stroke: #333;
  stroke-width: 3;
}
.group {
  display: flex;
  flex-direction: column;
  margin: 5px 0 4px;
  border-right: 1px solid #dcdcdc;
}
.sheet { width: 79px; }
.views { width: 219px; }
.dims { width: 203px; }
.notes { width: 268px; }
.tables { width: 131px; }
.show { width: 67px; }
.tools {
  flex: 1;
  display: flex;
  justify-content: center;
}
.sheet .tools {
  padding-left: 3px;
}
.views .tools {
  justify-content: flex-start;
  padding-left: 7px;
}
.dims .tools {
  justify-content: flex-start;
  padding-left: 8px;
}
.notes .tools {
  justify-content: flex-start;
  padding-left: 10px;
}
.tables .tools {
  padding-right: 4px;
}
.big {
  display: flex;
  flex-direction: column;
  align-items: center;
  font-size: 11px;
  line-height: 20px;
  white-space: nowrap;
}
.big svg {
  width: 33px;
  height: 33px;
  margin-bottom: 1px;
}
.w57 { width: 57px; }
.w54 { width: 54px; }
.w41 { width: 41px; }
.w37 { width: 37px; }
.arrow {
  display: block;
  width: 6px;
  height: 3px;
  border: 3px solid transparent;
  border-top: 3px solid #1a1a1a;
  border-bottom: none;
}
.big .arrow {
  margin-top: 3px;
}
.grid {
  display: grid;
  grid-auto-rows: 35px;
  margin-top: -2px;
}
.grid button {
  display: flex;
  align-items: center;
  justify-content: center;
}
.c3 { grid-template-columns: repeat(3, 33px); }
.c2 { grid-template-columns: repeat(2, 33px); }
.c6 { grid-template-columns: repeat(6, 33px); }
.arrow.more {
  margin: 14px 0 0 5px;
}
.group footer {
  height: 16px;
  padding-right: 8px;
  display: flex;
  align-items: center;
  margin-bottom: -3px;
  font-size: 11px;
  line-height: 16px;
  color: #00648a;
}
.group footer span {
  flex: 1;
  text-align: center;
}
.ribbon-end {
  margin: 82px 6px 0 auto;
}

/* selection bar */
.selbar {
  height: 28px;
  display: flex;
  align-items: center;
  padding: 0 6px 0 13px;
  border-bottom: 1px solid #a6a6a6;
  font-size: 11px;
}
.selbar svg {
  width: 16px;
  height: 16px;
  stroke-width: 1;
}
.selbar svg.grey {
  stroke: #b5b5b5;
}
.menubtn {
  display: flex;
  align-items: center;
  gap: 6px;
}
.menubtn svg {
  width: 11px;
  height: 11px;
}
.vsep {
  width: 1px;
  height: 20px;
  margin: 0 12px 0 7px;
  background: #dcdcdc;
}
.selbar select {
  height: 22px;
  padding: 0 2px;
  appearance: none;
  border: 1px solid #777;
  border-radius: 0;
  background: #fff url("data:image/svg+xml,%3Csvg xmlns='http://www.w3.org/2000/svg' width='8' height='4'%3E%3Cpath d='M0 0h8L4 4z' fill='%231a1a1a'/%3E%3C/svg%3E") no-repeat right 4px center;
}
.s1 { width: 149px; }
.s2 { width: 156px; }
.ic {
  width: 25px;
  height: 22px;
  display: flex;
  align-items: center;
  justify-content: center;
}
.s1 + .ic {
  width: 34px;
}
.s2 + .ic {
  margin-left: 4px;
}
.selbar > .arrow {
  margin-left: 4px;
}
.vsep.end {
  margin-left: 11px;
}
.selbar > .bar-end {
  margin: 7px 0 0 auto;
}

/* left rail */
.main {
  flex: 1;
  min-height: 0;
  display: flex;
}
.rail {
  width: 37px;
  display: flex;
  flex-direction: column;
  background: #dcdcdc;
  border-right: 1px solid #a6a6a6;
}
.rail button {
  height: 44px;
  margin-left: 3px;
  margin-right: -1px;
  display: flex;
  align-items: center;
  justify-content: center;
}
.rail .gear {
  height: 30px;
  margin: 0 0 3px;
}
.rail .on {
  border: 1px solid #a6a6a6;
  border-right: none;
  background: #fff;
}
.rail svg {
  width: 24px;
  height: 24px;
  fill: none;
  stroke: #444;
}
.rail .gear svg {
  width: 16px;
  height: 16px;
  stroke-width: 1.5;
}

/* part navigator */
.panel {
  width: 323px;
  display: flex;
  flex-direction: column;
  padding: 0 9px 6px 8px;
  border-right: 1px solid #a6a6a6;
}
.panel-head {
  height: 27px;
  display: flex;
  align-items: center;
  padding: 0 2px 2px 0;
}
.panel-head svg {
  width: 16px;
  height: 16px;
  margin: 0 4px 0 -2px;
}
.panel-head h2 {
  flex: 1;
  margin: 0;
  font-size: 12px;
  font-weight: 500;
}
.panel-head button {
  width: 12px;
  height: 11px;
  border: 1px solid #000;
  border-top-width: 2px;
}
.tree {
  flex: 1;
  min-height: 0;
  display: flex;
  flex-direction: column;
  border: 1px solid #dcdcdc;
}
.rows {
  flex: 1;
  min-height: 0;
  overflow: hidden;
}
table {
  width: 100%;
  table-layout: fixed;
  border-collapse: collapse;
}
.c-s { width: 24px; }
.c-n { width: 60px; }
th {
  height: 21px;
  padding: 1px 0 0 6px;
  text-align: left;
  font-weight: normal;
  line-height: 19px;
  background: #efefef;
  border-right: 1px solid #dcdcdc;
  border-bottom: 1px solid #d0d0d0;
  white-space: nowrap;
}
.sort {
  display: inline-block;
  margin: 0 0 2px 18px;
  border: 4px solid transparent;
  border-bottom: 5px solid #111;
  border-top: none;
}
td {
  height: 20px;
  padding: 0;
  border-right: 1px solid #e4e4e4;
  border-bottom: 1px solid #e9e9e9;
}
th:last-child, td:last-child {
  border-right: none;
}
tr:nth-child(even) td {
  background: #f9f9f9;
}
td svg {
  width: 16px;
  height: 16px;
  display: block;
}
td > svg {
  margin: 0 auto;
}
.n {
  height: 19px;
  display: flex;
  align-items: center;
}
.n b {
  margin-left: 3px;
  font-weight: normal;
  line-height: 19px;
  white-space: nowrap;
}
.dim b {
  color: #9a9a9a;
}
.cur b {
  font-weight: bold;
}
/* dotted guides of the tree */
.g {
  --dots: repeating-linear-gradient(#999 0 1px, transparent 1px 2px);
  --dash: repeating-linear-gradient(90deg, #999 0 1px, transparent 1px 2px);
  flex: none;
  width: 19px;
  height: 20px;
  background-repeat: no-repeat;
}
.v {
  background-image: var(--dots);
  background-size: 1px 100%;
  background-position: 9px 0;
}
.t {
  background-image: var(--dots), var(--dash);
  background-size: 1px 100%, 9px 1px;
  background-position: 9px 0, 10px 10px;
}
.l {
  background-image: var(--dots), var(--dash);
  background-size: 1px 10px, 9px 1px;
  background-position: 9px 0, 10px 10px;
}
/* expand boxes: the glyph is drawn by gradients */
button.g {
  --ink: linear-gradient(#222, #222);
  --paper: linear-gradient(#fff, #fff);
  --frame: linear-gradient(#ccc, #ccc);
  --vbar: linear-gradient(transparent, transparent);
  background-image: var(--ink), var(--vbar), var(--paper), var(--frame), var(--dash), var(--dots);
  background-size: 5px 1px, 1px 5px, 7px 7px, 9px 9px, 4px 1px, 1px 100%;
  background-position: 7px 10px, 9px 8px, 6px 7px, 5px 6px, 15px 10px, 9px 0;
}
button.plus {
  --vbar: linear-gradient(#222, #222);
}
button.t0 {
  background-size: 5px 1px, 1px 5px, 7px 7px, 9px 9px, 4px 1px, 1px 10px;
  background-position: 7px 10px, 9px 8px, 6px 7px, 5px 6px, 15px 10px, 9px 10px;
}
button.t2 {
  background-size: 5px 1px, 1px 5px, 7px 7px, 9px 9px, 4px 1px, 1px 10px;
}
.hscroll {
  height: 16px;
  padding: 7px 50px 0 17px;
  background: #efefef;
}
.hscroll i {
  display: block;
  height: 2px;
  background: #858585;
}
.splitter {
  height: 6px;
  margin-top: 2px;
  border: 1px solid #a6a6a6;
  background: #dcdcdc;
}
.acc {
  display: flex;
  flex-direction: column;
  padding-top: 2px;
}
.acc button {
  height: 24px;
  display: flex;
  align-items: center;
  padding: 1px 0 0 10px;
  border-bottom: 2px solid #d2d2d2;
  color: #006c92;
  font-size: 14px;
  line-height: 20px;
}
.acc button::before {
  content: "";
  margin-right: 10px;
  border: 4px solid transparent;
  border-left: 4px solid #00648a;
  border-right: none;
}

/* drawing area */
.work {
  flex: 1;
  min-width: 0;
  display: flex;
  flex-direction: column;
}
.tabs {
  height: 27px;
  display: flex;
  border-bottom: 2px solid #00648a;
}
.tab {
  height: 25px;
  display: flex;
  align-items: center;
  gap: 5px;
  padding: 0 6px 0 5px;
  background: #00648a;
  color: #fff;
}
.tab svg {
  width: 16px;
  height: 16px;
  display: block;
}
.tab svg.s {
  width: 10px;
  height: 12px;
  margin-left: 2px;
}
.canvas {
  flex: 1;
  min-height: 0;
  display: flex;
  flex-direction: column;
  justify-content: flex-end;
  position: relative;
  background: #ccc;
  border-bottom: 1px solid #a6a6a6;
}
.drawing {
  position: absolute;
  top: 0;
  left: 0;
  width: 100%;
}
.thick, .edge {
  fill: none;
  stroke: #000;
}
.thick { stroke-width: 1.6; }
.edge { stroke-width: 4; }
.axis {
  fill: none;
  stroke: #666;
}
.mark {
  fill: none;
  stroke: #000;
}
.w3 {
  stroke-width: 3 !important;
}
.cut {
  fill: url(#hatch);
  stroke: #000;
  stroke-width: 4;
}
.body path, .body ellipse {
  stroke-width: 4;
  stroke-linejoin: round;
}
.body > :not(.axis) {
  stroke: #000;
}
.br { fill: #b06a00; }
.or1 { fill: #ff9a00; }
.gr { fill: #c8f59b; }
.lbl, .sec {
  font-family: "Liberation Mono", monospace;
  fill: #222;
  stroke: #ccc;
  stroke-width: 1;
}
.lbl { font-size: 24px; }
.sec { font-size: 29px; }
.sheetname {
  padding: 0 0 3px 11px;
  font: 13px/16px "Liberation Sans", sans-serif;
}

.status {
  height: 20px;
  padding-left: 3px;
  font-size: 11px;
  font-weight: bold;
  line-height: 20px;
}

/* input method bar, floats over everything */
.ime {
  position: absolute;
  right: 539px;
  bottom: 0;
  height: 24px;
  display: flex;
  align-items: center;
  gap: 8px;
  padding: 0 4px 0 0;
  background: #fff;
  border: 1px solid #9fc0e4;
  border-bottom: none;
  color: #0a6fd8;
  font-size: 14px;
}
.ime svg {
  width: 16px;
  height: 16px;
  fill: #0a6fd8;
}
.ime .sogou {
  width: 32px;
  height: 30px;
  margin: -6px 0 0 -16px;
}
.mark-text {
  position: absolute;
  right: 4px;
  bottom: 9px;
  font-size: 38px;
  font-weight: 300;
  line-height: 50px;
  color: rgba(225, 225, 225, .85);
  text-shadow: 1px 1px 1px #888;
}
```
